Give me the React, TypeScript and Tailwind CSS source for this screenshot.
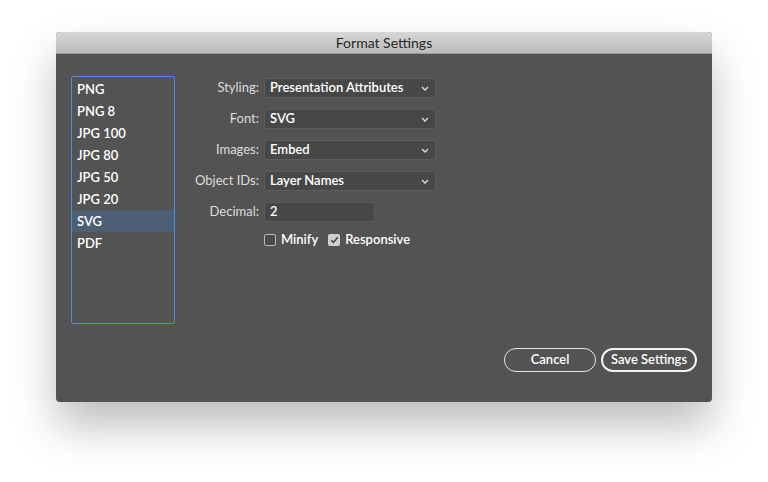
import React, { useState } from 'react';

const formats = ['PNG', 'PNG 8', 'JPG 100', 'JPG 80', 'JPG 50', 'JPG 20', 'SVG', 'PDF'];

const selects = [
  { label: 'Styling:', value: 'Presentation Attributes' },
  { label: 'Font:', value: 'SVG' },
  { label: 'Images:', value: 'Embed' },
  { label: 'Object IDs:', value: 'Layer Names' },
];

const Chevron = () => (
  <svg width="8" height="5" viewBox="0 0 8 5" className="text-[#e0e0e0]">
    <path d="M1 1 L4 4 L7 1" fill="none" stroke="currentColor" strokeWidth="1.3" />
  </svg>
);

const App = () => {
  const [selected, setSelected] = useState('SVG');
  const [minify, setMinify] = useState(false);
  const [responsive, setResponsive] = useState(true);

  return (
    <div className="w-[768px] h-[482px] bg-white pt-[32px] pl-[56px] font-['Lato','Open_Sans',sans-serif]">
      <div className="w-[656px] h-[370px] rounded-[4px] bg-[#535353] overflow-hidden flex flex-col shadow-[0_24px_44px_rgba(0,0,0,0.26)]">
        <div className="h-[22px] shrink-0 bg-gradient-to-b from-[#d6d6d6] to-[#bcbcbc] border-b border-[#9a9a9a] flex items-center justify-center text-[14px] text-[#262626]">
          Format Settings
        </div>
        <div className="flex-1 flex flex-col px-[15px] pt-[22px]">
          <div className="flex">
            <ul className="w-[104px] h-[248px] border border-[#4a8fdc] rounded-[2px] py-[1px]">
              {formats.map((f) => (
                <li
                  key={f}
                  onClick={() => setSelected(f)}
                  className={`h-[22px] flex items-center pl-[5px] pt-[1px] text-[13px] text-white font-semibold cursor-default ${
                    selected === f ? 'bg-[#4d5f75]' : ''
                  }`}
                >
                  {f}
                </li>
              ))}
            </ul>
            <div className="pt-[2px] flex flex-col">
              <div className="flex flex-col gap-[11px]">
                {selects.map((s) => (
                  <div key={s.label} className="flex items-center h-[20px]">
                    <span className="w-[89px] text-right text-[13px] text-[#dcdcdc] pr-[5px]">{s.label}</span>
                    <div className="w-[172px] h-[20px] bg-[#474747] border border-[#5c5c5c] rounded-[2px] flex items-center justify-between pl-[5px] pr-[6px]">
                      <span className="text-[13px] text-white font-semibold">{s.value}</span>
                      <Chevron />
                    </div>
                  </div>
                ))}
                <div className="flex items-center h-[20px]">
                  <span className="w-[89px] text-right text-[13px] text-[#dcdcdc] pr-[5px]">Decimal:</span>
                  <div className="w-[111px] h-[20px] bg-[#474747] border border-[#5c5c5c] rounded-[2px] flex items-center pl-[5px]">
                    <span className="text-[13px] text-white font-semibold">2</span>
                  </div>
                </div>
              </div>
              <div className="flex items-center ml-[89px] mt-[8px] h-[20px]">
                <button onClick={() => setMinify(!minify)} className="flex items-center">
                  <span className="w-[12px] h-[12px] border border-[#bdbdbd] rounded-[2px] bg-[#4a4a4a]" />
                  <span className="ml-[5px] text-[13px] text-white font-semibold">Minify</span>
                </button>
                <button onClick={() => setResponsive(!responsive)} className="flex items-center ml-[10px]">
                  <span className="w-[12px] h-[12px] rounded-[2px] bg-[#cfcfcf] flex items-center justify-center">
                    {responsive && (
                      <svg width="9" height="8" viewBox="0 0 9 8">
                        <path d="M1.2 4.2 L3.4 6.4 L7.8 1.2" fill="none" stroke="#3f3f3f" strokeWidth="1.5" />
                      </svg>
                    )}
                  </span>
                  <span className="ml-[5px] text-[13px] text-white font-semibold">Responsive</span>
                </button>
              </div>
            </div>
          </div>
          <div className="flex justify-end gap-[5px] mt-[24px]">
            <button className="w-[92px] h-[24px] rounded-full border border-[#e6e6e6] text-[13px] text-white font-semibold">
              Cancel
            </button>
            <button className="w-[96px] h-[24px] rounded-full border-2 border-[#f2f2f2] text-[13px] text-white font-semibold">
              Save Settings
            </button>
          </div>
        </div>
      </div>
    </div>
  );
};

export default App;
